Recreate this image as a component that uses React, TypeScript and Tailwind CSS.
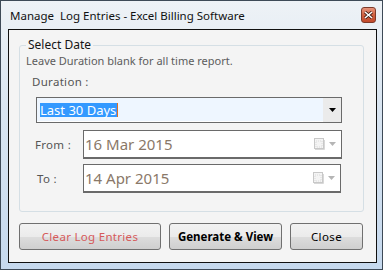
import React from "react";

const ui = { fontFamily: '"Noto Sans", "Open Sans", sans-serif' };

const CalendarGlyph = () => (
  <div className="flex items-center gap-[4px]">
    <svg width="11" height="12" viewBox="0 0 11 12">
      <rect x="0.5" y="0.5" width="9" height="10" fill="#f4f4f4" stroke="#c8c8c8" />
      <rect x="2" y="3" width="6" height="6" fill="none" stroke="#dadada" strokeDasharray="1 1" />
      <line x1="10.5" y1="2" x2="10.5" y2="11.5" stroke="#d8d8d8" />
      <line x1="1" y1="11.5" x2="10.5" y2="11.5" stroke="#d8d8d8" />
    </svg>
    <svg width="7" height="4" viewBox="0 0 7 4">
      <path d="M0 0 L7 0 L3.5 4 Z" fill="#b5b5b5" />
    </svg>
  </div>
);

const DateBox = ({ value, width }: { value: string; width: string }) => (
  <div
    className={`${width} h-[29px] border border-[#6a6a6a] border-b-2 bg-white flex items-center justify-between pl-[1px] pr-[5px]`}
  >
    <span className="text-[15px] leading-none text-[#8a7868]" style={ui}>
      {value}
    </span>
    <CalendarGlyph />
  </div>
);

const WinButton = ({
  label,
  width,
  className,
}: {
  label: string;
  width: string;
  className?: string;
}) => (
  <button
    type="button"
    className={`${width} h-[27px] rounded-[3px] border border-[#707070] bg-[linear-gradient(#f2f2f2_0%,#ebebeb_50%,#dddddd_51%,#cfcfcf_100%)] text-[11.5px] leading-none ${className ?? ""}`}
    style={ui}
  >
    {label}
  </button>
);

export default function App() {
  return (
    <div className="w-[384px] h-[271px] bg-white">
      <div className="w-[383px] h-[270px] border border-[#3e4a57] bg-[linear-gradient(#eef2f6,#d9e5f1_40%,#c6d9ee)] flex flex-col">
        {/* title bar */}
        <div className="h-[28px] flex items-start justify-between pl-[9px] pr-[6px]">
          <span className="mt-[7px] text-[11.5px] leading-[16px] text-[#111]" style={ui}>
            Manage&nbsp; Log Entries - Excel Billing Software
          </span>
          <div className="mt-[6px] w-[15px] h-[16px] rounded-[3px] border border-[#7d3a2a] bg-[linear-gradient(#e8957d,#d0603f_50%,#c24a2c)] flex items-center justify-center">
            <svg width="9" height="8" viewBox="0 0 9 8">
              <path d="M1 1 L8 7 M8 1 L1 7" stroke="#3a1a12" strokeWidth="3" />
              <path d="M1 1 L8 7 M8 1 L1 7" stroke="#ffffff" strokeWidth="1.6" />
            </svg>
          </div>
        </div>

        {/* client area */}
        <div className="ml-[7px] w-[369px] h-[234px] border border-[#101010] bg-[#f4f4f4] flex flex-col" style={ui}>
          <fieldset className="ml-[10px] mt-[7px] w-[345px] h-[175px] border border-[#d5dfe5] rounded-[3px] pl-[6px]">
            <legend className="px-[2px] text-[12px] leading-[16px] text-[#151515]">
              Select Date
            </legend>
            <div className="text-[11px] leading-[15px] text-[#5c5c5c]">
              Leave Duration blank for all time report.
            </div>
            <div className="mt-[7px] ml-[6px] text-[11.5px] leading-[14px] text-[#555] tracking-[0.3px]">
              Duration :
            </div>
            <div className="mt-[8px] ml-[10px] w-[306px] h-[26px] border border-[#6a6a6a] bg-[#eef6ff] flex">
              <div className="flex-1 flex items-center pl-[3px] border-b border-white">
                <span className="bg-[#3399ff] text-white text-[13px] leading-[14px] pr-[1px] border-r border-[#e07020]">
                  Last 30 Days
                </span>
              </div>
              <div className="w-[18px] bg-[#ebebeb] flex items-center justify-center">
                <svg width="7" height="4" viewBox="0 0 7 4">
                  <path d="M0 0 L7 0 L3.5 4 Z" fill="#000" />
                </svg>
              </div>
            </div>
            <div className="mt-[7px] flex items-center">
              <span className="ml-[9px] w-[48px] text-[11.5px] text-[#555] tracking-[0.3px]">From :</span>
              <DateBox value="16 Mar 2015" width="w-[259px]" />
            </div>
            <div className="mt-[5px] flex items-center">
              <span className="ml-[11px] w-[46px] text-[11.5px] text-[#555] tracking-[0.3px]">To :</span>
              <DateBox value="14 Apr 2015" width="w-[258px]" />
            </div>
          </fieldset>

          <div className="mt-[11px] ml-[10px] flex gap-[8px]">
            <WinButton label="Clear Log Entries" width="w-[142px]" className="text-[#d65a5a] tracking-[0.3px]" />
            <WinButton label="Generate & View" width="w-[113px]" className="font-bold text-black" />
            <WinButton label="Close" width="w-[73px]" className="text-black tracking-[0.4px]" />
          </div>
        </div>
      </div>
    </div>
  );
}
